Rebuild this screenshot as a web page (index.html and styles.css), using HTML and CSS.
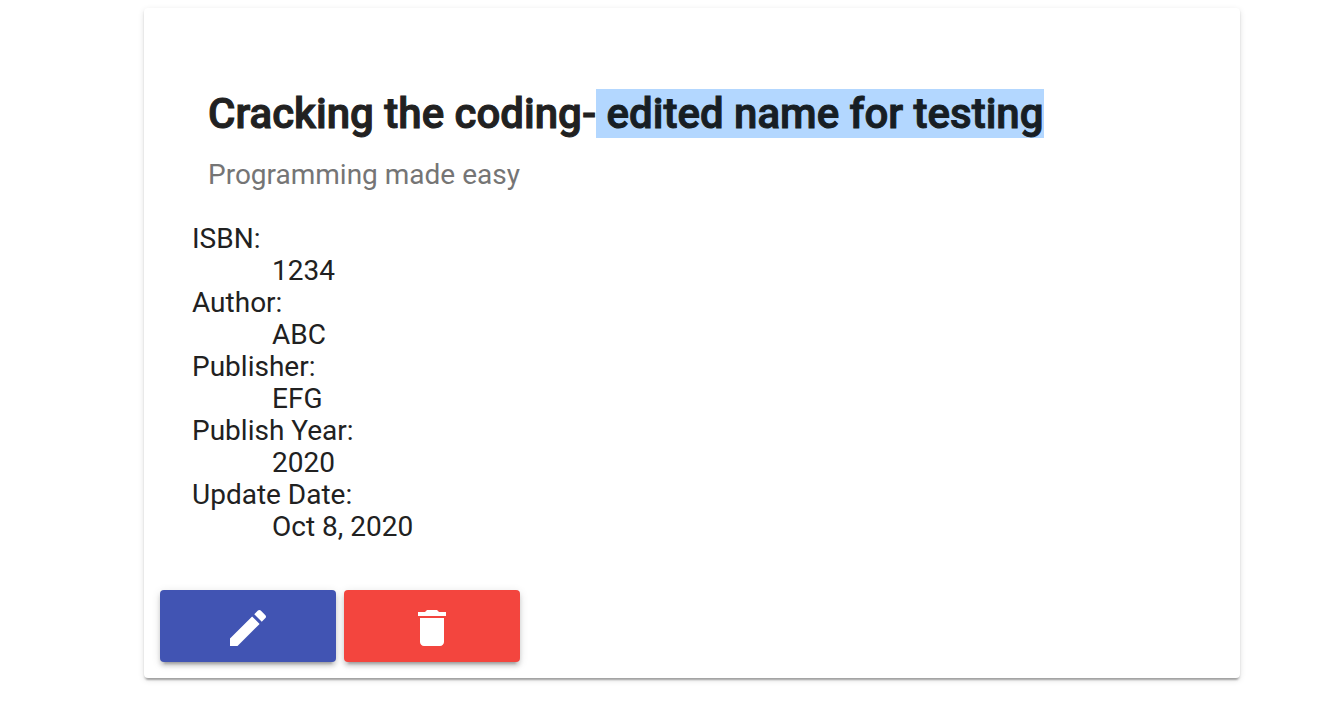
FILE: index.html
```html
<!DOCTYPE html>
<html lang="en">
<head>
<meta charset="utf-8">
<title>Book Detail</title>
<link rel="stylesheet" href="styles.css">
</head>
<body>
<main class="card">
  <header class="card-header">
    <h1 class="title">Cracking the coding-<span class="selected"> edited name for testing</span></h1>
    <p class="subtitle">Programming made easy</p>
  </header>
  <dl class="details">
    <dt>ISBN:</dt>
    <dd>1234</dd>
    <dt>Author:</dt>
    <dd>ABC</dd>
    <dt>Publisher:</dt>
    <dd>EFG</dd>
    <dt>Publish Year:</dt>
    <dd>2020</dd>
    <dt>Update Date:</dt>
    <dd>Oct 8, 2020</dd>
  </dl>
  <div class="actions">
    <button class="button edit" type="button" aria-label="Edit">
      <svg class="icon" viewBox="0 0 24 24" aria-hidden="true"><path d="M3 17.25V21h3.75L17.81 9.94l-3.75-3.75L3 17.25zM20.71 7.04c.39-.39.39-1.02 0-1.41l-2.34-2.34c-.39-.39-1.02-.39-1.41 0l-1.83 1.83 3.75 3.75 1.83-1.83z"/></svg>
    </button>
    <button class="button delete" type="button" aria-label="Delete">
      <svg class="icon" viewBox="0 0 24 24" aria-hidden="true"><path d="M6 19c0 1.1.9 2 2 2h8c1.1 0 2-.9 2-2V7H6v12zM19 4h-3.5l-1-1h-5l-1 1H5v2h14V4z"/></svg>
    </button>
  </div>
</main>
</body>
</html>
```
FILE: styles.css
```css
* {
  box-sizing: border-box;
}

body {
  margin: 0;
  padding: 8px 88px 32px 144px;
  background: #fff;
  color: #212121;
  font-family: Roboto, "Liberation Sans", sans-serif;
  font-size: 28px;
  line-height: 32px;
}

.card {
  padding: 80px 16px 16px;
  border-radius: 4px;
  background: #fff;
  box-shadow: 0 4px 2px -2px rgba(0, 0, 0, 0.2), 0 2px 2px rgba(0, 0, 0, 0.14), 0 2px 6px rgba(0, 0, 0, 0.12);
}

.card-header {
  padding: 0 48px;
}

.title {
  margin: 0;
  font-size: 42px;
  font-weight: 500;
  line-height: 52px;
  -webkit-text-stroke: 1px currentColor;
}

.selected {
  background: #b3d7ff;
  color: #171e24;
}

.subtitle {
  margin: 19px 0 0;
  color: #757575;
}

.details {
  margin: 32px 32px 0;
}

.details dd {
  margin: 0 0 0 80px;
}

.actions {
  display: flex;
  gap: 8px;
  margin-top: 47px;
}

.button {
  display: flex;
  align-items: center;
  justify-content: center;
  width: 176px;
  height: 72px;
  padding: 4px 0 0;
  border: 0;
  border-radius: 4px;
  color: #fff;
  cursor: pointer;
  box-shadow: 0 6px 2px -4px rgba(0, 0, 0, 0.2), 0 4px 4px rgba(0, 0, 0, 0.14), 0 2px 10px rgba(0, 0, 0, 0.12);
}

.edit {
  background: #4154b3;
}

.delete {
  background: #f3453e;
}

.icon {
  width: 48px;
  height: 48px;
  fill: currentColor;
}
```
